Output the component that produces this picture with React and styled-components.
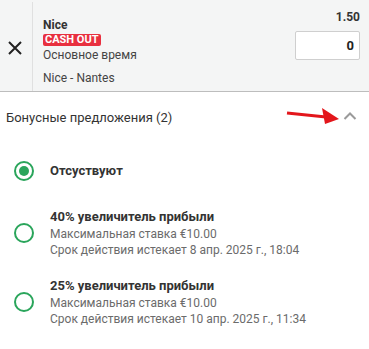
import styled, { createGlobalStyle } from "styled-components";

const GlobalStyle = createGlobalStyle`
  body {
    margin: 0;
    background: #fff;
    font-family: Roboto, "Liberation Sans", sans-serif;
    color: #333;
  }
`;

const offers = [
  { title: "40% увеличитель прибыли", stake: "Максимальная ставка €10.00", expires: "Срок действия истекает 8 апр. 2025 г., 18:04" },
  { title: "25% увеличитель прибыли", stake: "Максимальная ставка €10.00", expires: "Срок действия истекает 10 апр. 2025 г., 11:34" },
];

const App = () => {
  return (
    <Page>
      <GlobalStyle />
      <BetSlip>
        <CloseCell>
          <svg width="14" height="14" viewBox="0 0 14 14">
            <path d="M1 1 L13 13 M13 1 L1 13" stroke="#222" strokeWidth="2" />
          </svg>
        </CloseCell>
        <BetInfo>
          <Team>Nice</Team>
          <Badge>CASH OUT</Badge>
          <Market>Основное время</Market>
          <Match>Nice - Nantes</Match>
        </BetInfo>
        <StakeCol>
          <Odds>1.50</Odds>
          <StakeInput defaultValue="0" />
        </StakeCol>
      </BetSlip>
      <BonusHeader>
        <BonusTitle>Бонусные предложения (2)</BonusTitle>
        <Chevron width="14" height="10" viewBox="0 0 14 10">
          <path d="M1.5 8 L7 2.5 L12.5 8" stroke="#9a9a9a" strokeWidth="2" fill="none" />
        </Chevron>
        <Arrow width="56" height="22" viewBox="0 0 56 22">
          <path d="M2 9 L41 13" stroke="#e3161b" strokeWidth="3" />
          <path d="M37 4 L54 15 L40 20 Z" fill="#e3161b" />
        </Arrow>
      </BonusHeader>
      <OfferList>
        <OfferRow $spaced>
          <Radio $checked />
          <OfferBody>
            <OfferTitle>Отсуствуют</OfferTitle>
          </OfferBody>
        </OfferRow>
        {offers.map((o) => (
          <OfferRow key={o.title}>
            <Radio />
            <OfferBody>
              <OfferTitle>{o.title}</OfferTitle>
              <OfferLine>{o.stake}</OfferLine>
              <OfferLine>{o.expires}</OfferLine>
            </OfferBody>
          </OfferRow>
        ))}
      </OfferList>
    </Page>
  );
};

const Page = styled.div`
  width: 369px;
  height: 349px;
  overflow: hidden;
`;

const BetSlip = styled.div`
  display: flex;
  height: 92px;
  background: #f4f5f5;
  border-bottom: 1px solid #bdbdbd;
  padding-top: 2px;
  box-sizing: border-box;
`;

const CloseCell = styled.div`
  width: 30px;
  border-right: 1px solid #e0e0e0;
  display: flex;
  align-items: center;
  justify-content: center;
  padding-right: 2px;
  padding-top: 2px;
`;

const BetInfo = styled.div`
  flex: 1;
  padding: 16px 0 0 10px;
  display: flex;
  flex-direction: column;
  align-items: flex-start;
`;

const Team = styled.div`
  font-size: 12px;
  font-weight: 700;
  line-height: 15px;
  color: #333;
`;

const Badge = styled.span`
  background: #e8303f;
  color: #fff;
  font-size: 11px;
  font-weight: 700;
  line-height: 12px;
  padding: 0 2px;
  border-radius: 2px;
  margin-top: 1px;
`;

const Market = styled.div`
  font-size: 12px;
  line-height: 15px;
  color: #444;
  margin-top: 2px;
`;

const Match = styled.div`
  font-size: 12px;
  line-height: 15px;
  color: #444;
  margin-top: 8px;
`;

const StakeCol = styled.div`
  display: flex;
  flex-direction: column;
  align-items: flex-end;
  padding: 8px 9px 0 0;
`;

const Odds = styled.div`
  font-size: 12px;
  font-weight: 700;
  line-height: 15px;
  color: #333;
`;

const StakeInput = styled.input`
  width: 65px;
  height: 29px;
  box-sizing: border-box;
  margin-top: 6px;
  border: 1px solid #cfcfcf;
  border-radius: 2px;
  background: #fff;
  text-align: right;
  padding: 0 5px;
  font-family: Roboto, "Liberation Sans", sans-serif;
  font-size: 13px;
  font-weight: 700;
  color: #222;
  outline: none;
`;

const BonusHeader = styled.div`
  position: relative;
  display: flex;
  align-items: center;
  justify-content: space-between;
  height: 50px;
  padding: 0 12px 0 6px;
`;

const BonusTitle = styled.div`
  font-size: 13px;
  color: #333;
`;

const Chevron = styled.svg`
  margin-top: -3px;
`;

const Arrow = styled.svg`
  position: absolute;
  left: 285px;
  top: 12px;
`;

const OfferList = styled.div`
  display: flex;
  flex-direction: column;
  gap: 19px;
  padding: 19px 0 0 14px;
`;

const OfferRow = styled.div`
  display: flex;
  align-items: center;
  gap: 16px;
  margin-bottom: ${(p) => (p.$spaced ? "8px" : "0")};
`;

const Radio = styled.span`
  width: 20px;
  height: 20px;
  box-sizing: border-box;
  border-radius: 50%;
  border: 2px solid #2aa55b;
  flex-shrink: 0;
  display: flex;
  align-items: center;
  justify-content: center;
  &::after {
    content: "";
    width: 10px;
    height: 10px;
    border-radius: 50%;
    background: ${(p) => (p.$checked ? "#2aa55b" : "transparent")};
  }
`;

const OfferBody = styled.div`
  display: flex;
  flex-direction: column;
`;

const OfferTitle = styled.div`
  font-size: 13px;
  font-weight: 700;
  line-height: 18px;
  color: #333;
`;

const OfferLine = styled.div`
  font-size: 12px;
  line-height: 16px;
  color: #6b6b6b;
`;

export default App;
